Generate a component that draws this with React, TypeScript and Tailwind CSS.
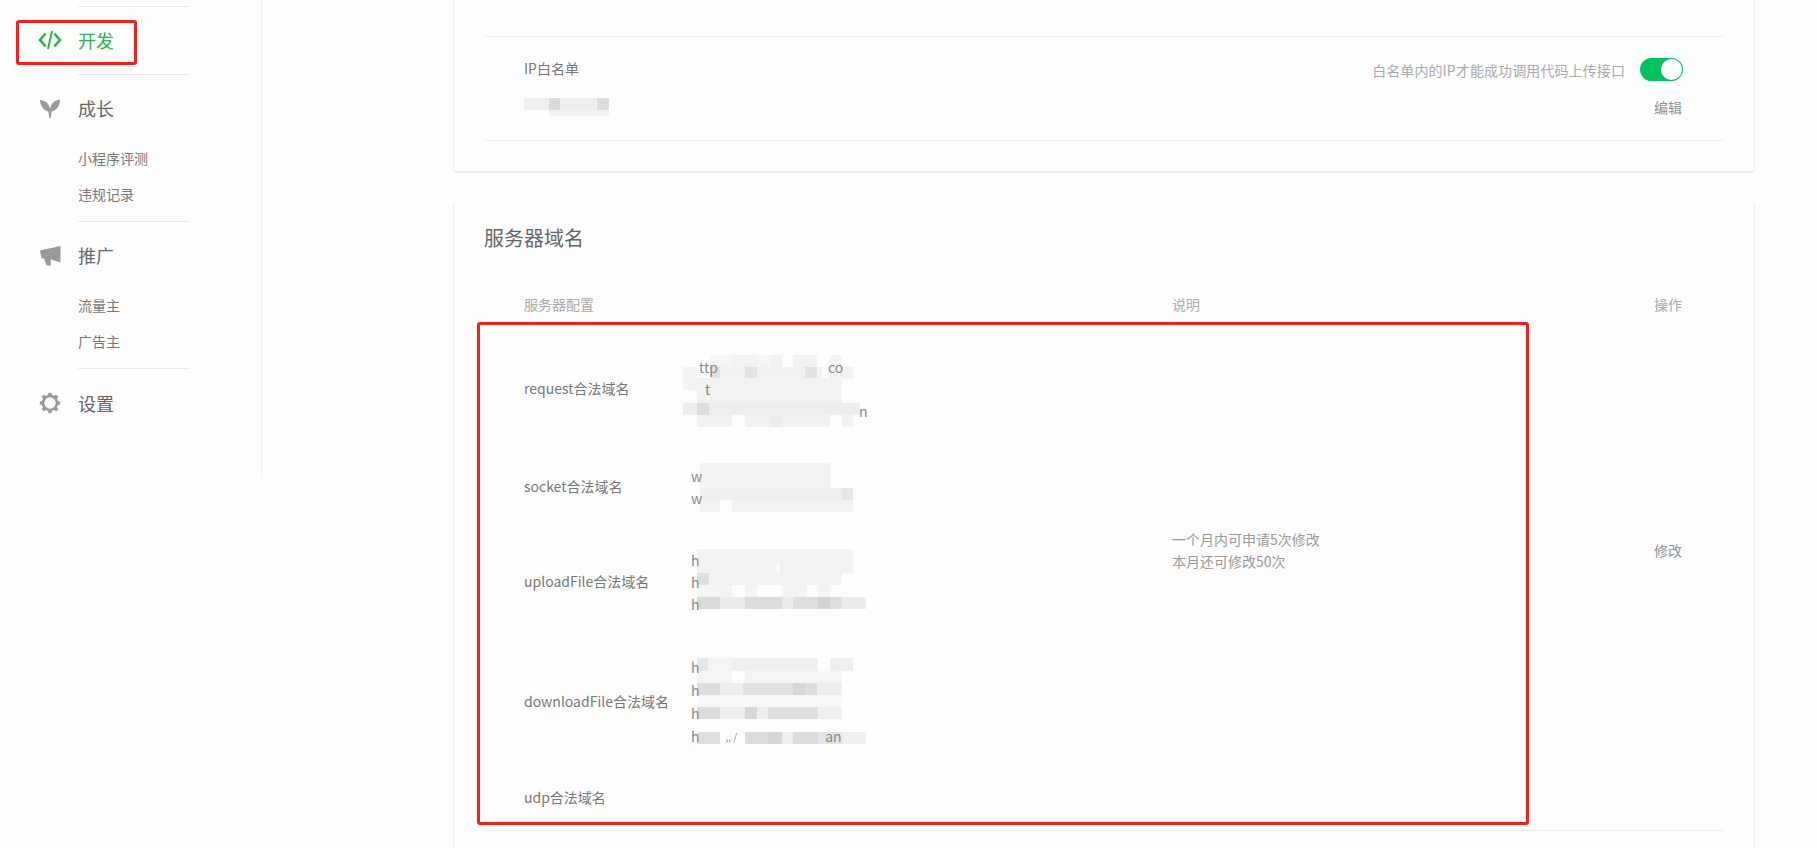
import React from "react";

type Tile = [number, number, number, number, string];

const tiles: Tile[] = [
  // request
  [710, 355, 72, 12, "#f6f6f6"], [732, 355, 25, 12, "#f3f3f3"], [770, 355, 12, 12, "#f2f2f2"], [793, 355, 24, 12, "#f2f2f2"], [830, 355, 12, 12, "#f3f3f3"],
  [683, 367, 14, 12, "#f3f3f3"], [710, 367, 112, 12, "#f1f1f1"], [830, 367, 23, 12, "#f1f1f1"], [710, 367, 10, 12, "#e3e3e3"], [745, 367, 12, 12, "#e2e2e2"], [805, 367, 12, 12, "#e2e2e2"],
  [683, 378, 159, 12, "#f3f3f3"],
  [697, 390, 145, 13, "#f2f2f2"],
  [683, 403, 177, 12, "#eeeeee"], [697, 403, 12, 12, "#dcdcdc"],
  [697, 415, 35, 12, "#f1f1f1"], [745, 415, 85, 12, "#f1f1f1"], [842, 415, 11, 12, "#f1f1f1"], [770, 415, 12, 12, "#ebebeb"],
  // socket
  [700, 463, 130, 25, "#f2f2f2"],
  [700, 488, 153, 12, "#efefef"], [842, 488, 11, 12, "#e6e6e6"],
  [700, 500, 20, 12, "#f2f2f2"], [732, 500, 121, 12, "#f2f2f2"],
  // uploadFile
  [697, 549, 156, 24, "#f2f2f2"], [776, 563, 4, 14, "#fdfdfd"],
  [697, 573, 145, 12, "#f2f2f2"], [697, 573, 12, 12, "#e0e0e0"],
  [697, 585, 35, 12, "#f4f4f4"], [745, 585, 12, 12, "#f4f4f4"], [782, 585, 25, 12, "#f4f4f4"], [818, 585, 12, 12, "#f4f4f4"],
  [697, 597, 169, 12, "#ebebeb"], [697, 597, 23, 12, "#d9d9d9"], [745, 597, 37, 12, "#dcdcdc"], [793, 597, 25, 12, "#dedede"], [818, 597, 12, 12, "#d2d2d2"], [830, 597, 12, 12, "#dedede"],
  // downloadFile
  [697, 658, 11, 13, "#e6e6e6"], [708, 658, 24, 13, "#f5f5f5"], [732, 658, 86, 13, "#efefef"], [830, 658, 23, 13, "#eeeeee"],
  [697, 671, 35, 12, "#f4f4f4"], [745, 671, 97, 12, "#f4f4f4"],
  [697, 683, 23, 12, "#dcdcdc"], [720, 683, 23, 12, "#eeeeee"], [743, 683, 50, 12, "#e0e0e0"], [793, 683, 12, 12, "#d4d6d8"], [805, 683, 12, 12, "#dddddd"], [817, 683, 25, 12, "#eeeeee"],
  [697, 695, 145, 12, "#f8f8f8"],
  [697, 707, 23, 12, "#dcdcdc"], [720, 707, 25, 12, "#eeeeee"], [745, 707, 12, 12, "#d5d7d9"], [757, 707, 11, 12, "#eeeeee"], [768, 707, 50, 12, "#dedede"], [818, 707, 24, 12, "#efefef"],
  [697, 732, 23, 12, "#e0e0e0"], [745, 732, 23, 12, "#dcdcdc"], [768, 732, 14, 12, "#d4d4d4"], [782, 732, 11, 12, "#eeeeee"], [793, 732, 25, 12, "#dcdcdc"], [818, 732, 24, 12, "#e6e6e6"], [842, 732, 24, 12, "#eeeeee"],
];

const ipTiles: Tile[] = [
  [525, 98, 85, 12, "#eeeeee"], [550, 98, 11, 12, "#dadada"], [598, 98, 12, 12, "#dcdcdc"], [550, 110, 60, 6, "#f1f1f1"],
];

function CodeIcon() {
  return (
    <svg width="24" height="20" viewBox="0 0 24 20" fill="none" stroke="#2fb14f" strokeWidth="2.6" strokeLinecap="square">
      <path d="M6.8 4.5 2 10 6.8 15.5" />
      <path d="M17.2 4.5 22 10 17.2 15.5" />
      <path d="M13.8 2 10.2 18" strokeWidth="2" />
    </svg>
  );
}

function SproutIcon() {
  return (
    <svg width="20" height="19" viewBox="0 0 20 19" fill="#999999">
      <path d="M0 1C5 1.5 9 4 9.6 9.2L10.4 9.2C11 4 15 1.5 20 .5 20 7 16 12 11.5 12.5L10.8 19H9.2L8.5 12.5C3.5 12 .5 7 0 1Z" />
    </svg>
  );
}

function MegaphoneIcon() {
  return (
    <svg width="21" height="20" viewBox="0 0 21 20" fill="#999999">
      <path d="M0 4.5 20.5 0V16.5L8 12.5H1.5Z" />
      <path d="M4 12H10.5L11 19.5H6.5Z" />
    </svg>
  );
}

function GearIcon() {
  return (
    <svg width="22" height="22" viewBox="0 0 22 22" fill="none" stroke="#999999">
      <circle cx="11" cy="11" r="7" strokeWidth="2.6" />
      <g strokeWidth="3.4">
        <path d="M11 .8V4" />
        <path d="M11 18V21.2" />
        <path d="M.8 11H4" />
        <path d="M18 11H21.2" />
        <path d="M3.8 3.8 6 6" />
        <path d="M16 16 18.2 18.2" />
        <path d="M3.8 18.2 6 16" />
        <path d="M16 6 18.2 3.8" />
      </g>
    </svg>
  );
}

function NavHead({ icon, label, active }: { icon: React.ReactNode; label: string; active?: boolean }) {
  return (
    <div className={`flex items-center ${active ? "text-[#2fb14f]" : "text-[#666666]"}`}>
      <span className="flex w-[78px] justify-center pl-[30px] pr-[8px]">{icon}</span>
      <span className="text-[18px]">{label}</span>
    </div>
  );
}

function NavSub({ label }: { label: string }) {
  return <div className="flex h-[36px] items-center pl-[78px] text-[14px] text-[#777777]">{label}</div>;
}

function Divider() {
  return <div className="ml-[78px] h-px w-[112px] bg-[#e8e8e8]" />;
}

function UrlLine({ children }: { children: React.ReactNode }) {
  return <div className="flex whitespace-pre">{children}</div>;
}

function Label({ children }: { children: React.ReactNode }) {
  return <div className="w-[167px] shrink-0 pb-[2px] text-[#777777]">{children}</div>;
}

export default function App() {
  return (
    <div className="flex h-[848px] overflow-hidden bg-[#fdfdfd] font-['Noto_Sans_CJK_SC',sans-serif] text-[14px]">
      <aside className="relative h-[477px] w-[262px] shrink-0 border-r border-[#eeeeee] pt-[6px]">
        <Divider />
        <div className="flex h-[67px] items-center pb-[1px]">
          <NavHead active icon={<CodeIcon />} label="开发" />
        </div>
        <Divider />
        <div className="flex h-[65px] items-center pb-[1px] pt-[2px]">
          <NavHead icon={<SproutIcon />} label="成长" />
        </div>
        <NavSub label="小程序评测" />
        <NavSub label="违规记录" />
        <div className="h-[9px]" />
        <Divider />
        <div className="flex h-[65px] items-center pt-[2px]">
          <NavHead icon={<MegaphoneIcon />} label="推广" />
        </div>
        <NavSub label="流量主" />
        <NavSub label="广告主" />
        <div className="h-[9px]" />
        <Divider />
        <div className="flex h-[68px] items-center">
          <NavHead icon={<GearIcon />} label="设置" />
        </div>
        <div className="absolute left-[16px] top-[20px] h-[45px] w-[121px] rounded-[3px] border-[3px] border-[#ee2020]" />
      </aside>

      <main className="ml-[191px] w-[1302px] shrink-0">
        <section className="h-[173px] rounded-b-[4px] border-x border-b-2 border-[#ececec] pl-[30px] pr-[30px] pt-[36px]">
          <div className="relative flex h-[105px] justify-between border-y border-[#f0f0f0] pl-[40px] pr-[41px]">
            <div>
              <div className="mt-[20px] leading-[22px] text-[#777777]">IP白名单</div>
              <svg className="absolute left-[40px] top-[61px]" width="85" height="18" viewBox="525 98 85 18">
                {ipTiles.map((t, i) => (
                  <rect key={i} x={t[0]} y={t[1]} width={t[2]} height={t[3]} fill={t[4]} />
                ))}
              </svg>
            </div>
            <div className="flex flex-col items-end pt-[21px]">
              <div className="flex items-center gap-[15px]">
                <span className="text-[14px] leading-[20px] tracking-[0.1px] text-[#aaaaaa]">白名单内的IP才能成功调用代码上传接口</span>
                <span className="flex h-[23px] w-[43px] items-center justify-end rounded-full bg-[#07c160] pr-[1px]">
                  <span className="h-[21px] w-[21px] rounded-full bg-white" />
                </span>
              </div>
              <div className="mr-[1px] mt-[15px] leading-[22px] text-[#8a909c]">编辑</div>
            </div>
          </div>
        </section>

        <section className="mt-[31px] h-[700px] border-x border-[#ececec] pl-[30px] pr-[30px]">
          <h2 className="pt-[19px] text-[20px] leading-[30px] text-[#666666]">服务器域名</h2>
          <div className="mt-[40px] grid h-[23px] grid-cols-[648px_482px_1fr] pl-[40px] leading-[22px] text-[#aaaaaa]">
            <div>服务器配置</div>
            <div>说明</div>
            <div>操作</div>
          </div>
          <div className="relative grid grid-cols-[648px_482px_1fr] border-b border-[#eeeeee] pb-[20px] pl-[40px] pt-[40px] text-[#888888]">
            <svg className="absolute left-[199px] top-[34px]" width="190" height="400" viewBox="683 350 190 400">
              {tiles.map((t, i) => (
                <rect key={i} x={t[0]} y={t[1]} width={t[2]} height={t[3]} fill={t[4]} />
              ))}
            </svg>
            <div className="relative leading-[22px]">
              <div className="flex items-center">
                <Label>request合法域名</Label>
                <div>
                  <UrlLine><span className="ml-[8px]">ttp</span><span className="ml-[110px]">co</span></UrlLine>
                  <UrlLine><span className="ml-[14px]">t</span></UrlLine>
                  <UrlLine><span className="ml-[168px]">n</span></UrlLine>
                </div>
              </div>
              <div className="mt-[43px] flex items-center">
                <Label>socket合法域名</Label>
                <div>
                  <UrlLine>w</UrlLine>
                  <UrlLine>w</UrlLine>
                </div>
              </div>
              <div className="mt-[40px] flex items-center">
                <Label>uploadFile合法域名</Label>
                <div>
                  <UrlLine>h</UrlLine>
                  <UrlLine>h</UrlLine>
                  <UrlLine>h</UrlLine>
                </div>
              </div>
              <div className="mt-[41px] flex items-center leading-[23px]">
                <Label>downloadFile合法域名</Label>
                <div>
                  <UrlLine>h</UrlLine>
                  <UrlLine>h</UrlLine>
                  <UrlLine>h</UrlLine>
                  <UrlLine>h<span className="ml-[26px] text-[10px]">,, /</span><span className="ml-[88px]">an</span></UrlLine>
                </div>
              </div>
              <div className="mt-[38px] flex items-center">
                <Label>udp合法域名</Label>
              </div>
            </div>
            <div className="relative pt-[172px] leading-[22px] text-[#999999]">
              <div>一个月内可申请5次修改</div>
              <div>本月还可修改50次</div>
            </div>
            <div className="relative pt-[183px] leading-[22px] text-[#8a909c]">修改</div>
            <div className="absolute -left-[7px] top-[6px] h-[503px] w-[1052px] rounded-[3px] border-[3px] border-[#ee2020]" />
          </div>
        </section>
      </main>
    </div>
  );
}
